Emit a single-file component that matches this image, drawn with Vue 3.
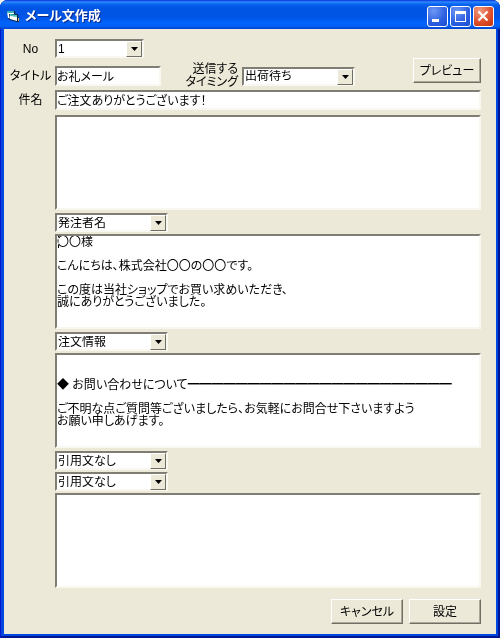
<script setup>
import { ref } from 'vue'

const no = ref('1')
const title = ref('お礼メール')
const timing = ref('出荷待ち')
const subject = ref('ご注文ありがとうございます！')

const insertOptions = ['引用文なし', '発注者名', '注文情報']

const opening = ref('')
const blocks = ref([
  {
    id: 'insert1',
    insert: '発注者名',
    caret: true,
    body: '〇〇様\n\nこんにちは、株式会社〇〇の〇〇です。\n\nこの度は当社ショップでお買い求めいただき、\n誠にありがとうございました。',
  },
  {
    id: 'insert2',
    insert: '注文情報',
    body:
      '\n\n◆ お問い合わせについて' +
      '━'.repeat(22) +
      '\n\nご不明な点ご質問等ございましたら、お気軽にお問合せ下さいますよう\nお願い申しあげます。',
  },
  { id: 'insert3', insert: '引用文なし', body: null },
  { id: 'insert4', insert: '引用文なし', body: '' },
])
</script>

<template>
  <main class="window">
    <header class="titlebar">
      <svg class="app-icon" viewBox="0 0 14 14" aria-hidden="true">
        <path d="M1 2l8 0 1 8-7 1z" fill="#0b2347" />
        <path d="M1 3l7 1v6l-6-1z" fill="#fff" />
        <path d="M1 2l7 0v2L1 4z" fill="#3cb4b4" />
        <path d="M3 5l9 0 1 8-2 0-7-2z" fill="#0b2347" />
        <path d="M4 6l7 1v5l-7-2z" fill="#fff" />
        <path d="M4 5l7 1v2L4 7z" fill="#49c4bc" />
        <path d="M12 9h1v3h-1z" fill="#d8b040" />
      </svg>
      <h1>メール文作成</h1>
      <div class="caption-buttons">
        <button type="button" class="caption" aria-label="最小化">
          <svg viewBox="0 0 18 18"><path d="M4 12h7v3H4z" fill="#fff" /></svg>
        </button>
        <button type="button" class="caption" aria-label="最大化">
          <svg viewBox="0 0 18 18">
            <path d="M4 4h11v11H4zM5 7v7h9V7z" fill="#fff" fill-rule="evenodd" />
          </svg>
        </button>
        <button type="button" class="caption close" aria-label="閉じる">
          <svg viewBox="0 0 18 18">
            <path d="M4.500 4.500l9 9M13.500 4.500l-9 9" stroke="#fff" stroke-width="2.200" />
          </svg>
        </button>
      </div>
    </header>

    <form class="client" @submit.prevent>
      <div class="top">
        <div class="fields">
          <label class="label" for="no">No</label>
          <div class="combo narrow">
            <select id="no" v-model="no">
              <option>1</option>
              <option>2</option>
              <option>3</option>
            </select>
            <span class="drop"><svg viewBox="0 0 7 4"><path d="M0 0h7L3.500 4z" /></svg></span>
          </div>
          <label class="label" for="title">タイトル</label>
          <div class="title-row">
            <input id="title" v-model="title" class="field" type="text" />
            <label class="timing-label" for="timing">送信する<br />タイミング</label>
            <div class="combo">
              <select id="timing" v-model="timing">
                <option>出荷待ち</option>
                <option>出荷済み</option>
              </select>
              <span class="drop"><svg viewBox="0 0 7 4"><path d="M0 0h7L3.500 4z" /></svg></span>
            </div>
          </div>
        </div>
        <button type="button" class="push preview">プレビュー</button>
      </div>

      <div class="subject-row">
        <label class="label" for="subject">件名</label>
        <input id="subject" v-model="subject" class="field" type="text" />
      </div>

      <div class="body">
        <div class="area"><textarea v-model="opening" aria-label="本文 1"></textarea></div>
        <template v-for="block in blocks" :key="block.id">
          <div class="combo">
            <select :id="block.id" v-model="block.insert" aria-label="引用文">
              <option v-for="option in insertOptions" :key="option">{{ option }}</option>
            </select>
            <span class="drop"><svg viewBox="0 0 7 4"><path d="M0 0h7L3.500 4z" /></svg></span>
          </div>
          <div v-if="block.body !== null" class="area">
            <textarea v-model="block.body" aria-label="本文"></textarea>
            <span v-if="block.caret" class="caret"></span>
          </div>
        </template>
      </div>

      <footer class="actions">
        <button type="button" class="push">キャンセル</button>
        <button type="submit" class="push">設定</button>
      </footer>
    </form>
  </main>
</template>

<style>
body {
  background: #f4f3ea;
}
</style>

<style scoped>
.window,
.window * {
  box-sizing: border-box;
}
.window {
  min-height: 100vh;
  display: flex;
  flex-direction: column;
  padding: 0 4px 4px;
  overflow: hidden;
  border-radius: 8px 8px 0 0;
  background: #0046e0;
  box-shadow: inset 1px 0 #0019cf, inset -2px 0 #001590, inset 0 -2px #001590;
  font-family: "Liberation Sans", "Noto Sans CJK JP", sans-serif;
  font-size: 12px;
  line-height: 12px;
  font-feature-settings: "palt";
  color: #000;
}
.titlebar {
  display: flex;
  align-items: center;
  height: 29px;
  margin: 0 -4px;
  padding: 3px 6px 0;
  background: linear-gradient(#0831d9 0, #2f8bff 2px, #0a66f0 4px, #0054e3 8px, #0055e6 17px, #0264fb 23px, #0261f5 26px, #0043cf 29px);
}
.app-icon {
  width: 14px;
  height: 14px;
}
h1 {
  flex: 1;
  margin: 0 0 0 5px;
  font-size: 13px;
  line-height: 16px;
  color: #fff;
  text-shadow: 1px 1px #0a2a8c;
}
.caption-buttons {
  display: flex;
  gap: 2px;
}
.caption {
  width: 21px;
  height: 21px;
  padding: 0;
  border: 1px solid #fff;
  border-radius: 3px;
  background: radial-gradient(circle at 30% 20%, #6d97f5, #2b5fe0 60%, #1a4bd0);
}
.caption.close {
  background: radial-gradient(circle at 30% 20%, #f09a80, #dc4c28 60%, #bf3510);
}
.caption svg {
  display: block;
  width: 18px;
  height: 18px;
}
.client {
  flex: 1;
  display: flex;
  flex-direction: column;
  padding: 10px 15px 10px 0;
  background: #ece9d8;
}
.top {
  display: flex;
  justify-content: space-between;
  align-items: flex-end;
}
.fields {
  display: grid;
  grid-template-columns: 51px auto;
  row-gap: 5px;
  align-items: center;
}
.label {
  padding-left: 2px;
  text-align: center;
  white-space: nowrap;
}
.title-row {
  display: flex;
  align-items: center;
}
.title-row .field {
  width: 106px;
}
.timing-label {
  width: 81px;
  padding-right: 4px;
  line-height: 13px;
  text-align: right;
}
.subject-row {
  display: grid;
  grid-template-columns: 51px 1fr;
  align-items: center;
  margin-top: 1px;
}
.field,
textarea,
select {
  display: block;
  width: 100%;
  margin: 0;
  border: 2px solid;
  border-color: #807d74 #f8f7f0 #f8f7f0 #807d74;
  border-radius: 0;
  outline: 0;
  background: #fff;
  color: #000;
  font: inherit;
  font-feature-settings: inherit;
}
.field {
  height: 20px;
  padding: 0 0 2px;
}
textarea {
  height: 95px;
  padding: 0;
  resize: none;
  overflow: hidden;
}
.combo {
  position: relative;
  width: 113px;
}
.combo.narrow {
  width: 89px;
}
select {
  height: 19px;
  padding: 0 18px 0 1px;
  appearance: none;
}
.drop {
  position: absolute;
  top: 2px;
  right: 2px;
  bottom: 1px;
  width: 16px;
  display: grid;
  place-items: center;
  border: 1px solid;
  border-color: #fff #716f64 #716f64 #fff;
  background: #ece9d8;
  pointer-events: none;
}
.drop svg {
  width: 7px;
  height: 4px;
}
.body {
  display: grid;
  gap: 2px;
  margin: 5px 0 0 51px;
}
.area {
  position: relative;
  margin-bottom: 1px;
}
.caret {
  position: absolute;
  top: 2px;
  left: 3px;
  width: 1px;
  height: 12px;
  background: #fff;
  mix-blend-mode: difference;
}
.push {
  width: 72px;
  height: 25px;
  padding: 0;
  border: 1px solid;
  border-color: #fff #716f64 #716f64 #fff;
  border-radius: 0;
  box-shadow: inset -1px -1px #aca899;
  background: #ece9d8;
  color: #000;
  font: inherit;
  font-feature-settings: inherit;
}
.preview {
  width: 68px;
  margin-bottom: 6px;
}
.actions {
  display: flex;
  justify-content: flex-end;
  gap: 6px;
  margin-top: auto;
}
</style>
